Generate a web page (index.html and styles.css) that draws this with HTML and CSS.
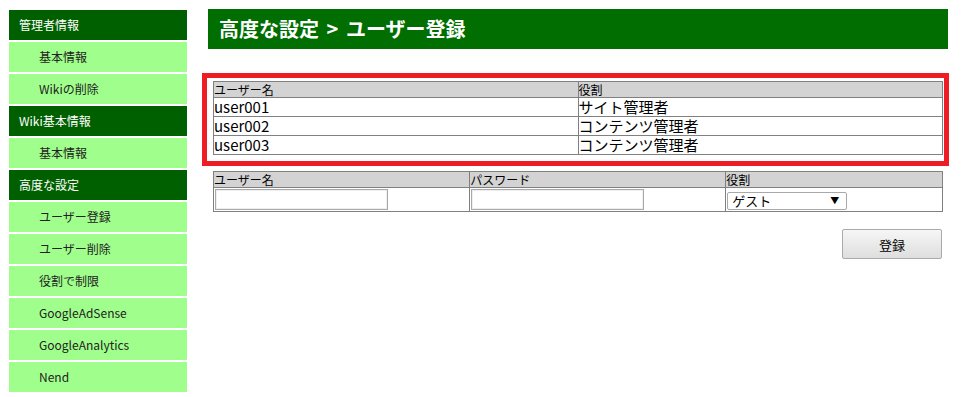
FILE: index.html
```html
<!DOCTYPE html>
<html lang="ja">
<head>
  <meta charset="UTF-8">
  <title>高度な設定 &gt; ユーザー登録</title>
  <link rel="stylesheet" href="styles.css">
</head>
<body>
  <div class="page">
    <nav class="sidebar">
      <div class="menu-head">管理者情報</div>
      <div class="menu-item">基本情報</div>
      <div class="menu-item">Wikiの削除</div>
      <div class="menu-head">Wiki基本情報</div>
      <div class="menu-item">基本情報</div>
      <div class="menu-head">高度な設定</div>
      <div class="menu-item">ユーザー登録</div>
      <div class="menu-item">ユーザー削除</div>
      <div class="menu-item">役割で制限</div>
      <div class="menu-item">GoogleAdSense</div>
      <div class="menu-item">GoogleAnalytics</div>
      <div class="menu-item">Nend</div>
    </nav>

    <main class="content">
      <h1 class="title">高度な設定 &gt; ユーザー登録</h1>

      <div class="highlight">
        <table class="user-table">
          <tr>
            <th>ユーザー名</th>
            <th>役割</th>
          </tr>
          <tr>
            <td>user001</td>
            <td>サイト管理者</td>
          </tr>
          <tr>
            <td>user002</td>
            <td>コンテンツ管理者</td>
          </tr>
          <tr>
            <td>user003</td>
            <td>コンテンツ管理者</td>
          </tr>
        </table>
      </div>

      <table class="form-table">
        <tr>
          <th class="col-name">ユーザー名</th>
          <th class="col-pass">パスワード</th>
          <th>役割</th>
        </tr>
        <tr>
          <td><input type="text" class="field"></td>
          <td><input type="password" class="field"></td>
          <td>
            <span class="select-wrap">
              <select class="role">
                <option>ゲスト</option>
                <option>コンテンツ管理者</option>
                <option>サイト管理者</option>
              </select>
            </span>
          </td>
        </tr>
      </table>

      <div class="actions">
        <button class="btn">登録</button>
      </div>
    </main>
  </div>
</body>
</html>
```

FILE: styles.css
```css
/* 全体 */
body {
  margin: 0;
  font-family: "Noto Sans CJK JP", "DejaVu Sans", sans-serif;
  color: #222;
  background-color: #fff;
}

.page {
  display: flex;
  align-items: flex-start;
  padding-left: 9px;
}

/* サイドメニュー */
.sidebar {
  width: 178px;
  margin-top: 10px;
  font-size: 12px;
}

.menu-head,
.menu-item {
  height: 30px;
  line-height: 30px;
  margin-bottom: 2px;
}

.menu-head {
  padding-left: 10px;
  background-color: #006000; /* 濃い緑 */
  color: #fff;
}

.menu-item {
  padding-left: 30px;
  background-color: #a0ff8c; /* 薄い緑 */
  color: #222;
}

/* メイン */
.content {
  width: 740px;
  margin-top: 9px;
  margin-left: 21px;
}

.title {
  margin: 0;
  height: 40px;
  line-height: 40px;
  padding-left: 11px;
  background-color: #006e00;
  color: #fff;
  font-size: 20px;
  font-weight: bold;
  word-spacing: 3px;
}

.highlight {
  margin: 24px -1px 0 -6px;
  padding: 3px 1px 6px 6px;
  border: 5px solid #ee1c25;
}

table {
  border-collapse: collapse;
  border: 1px solid #808080;
}

th,
td {
  border: 1px solid #808080;
  padding: 0;
  text-align: left;
  vertical-align: middle;
  overflow: hidden;
}

th {
  height: 15px;
  background-color: #d3d3d3;
  font-weight: normal;
  font-size: 12px;
  line-height: 15px;
  color: #000;
}

.user-table {
  width: 730px;
  table-layout: fixed;
}

.user-table td {
  height: 18px;
  font-size: 15px;
  line-height: 18px;
  color: #000;
}

.form-table {
  width: 730px;
  margin: 5px 5px 0;
  table-layout: fixed;
}

.form-table .col-name,
.form-table .col-pass {
  width: 35%;
}

.form-table td {
  padding: 1px;
  height: 21px;
  line-height: 0;
  font-size: 0;
}

.field {
  display: block;
  box-sizing: border-box;
  width: 173px;
  height: 21px;
  margin: 0;
  border: 1px solid #a9a9a9;
  box-shadow: inset 0 0 0 1px #eee;
}

.select-wrap {
  position: relative;
  display: inline-block;
  vertical-align: top;
  margin-top: 2px;
}

.select-wrap::after {
  content: "▼";
  position: absolute;
  right: 8px;
  top: 3px;
  font-size: 9px;
  line-height: 12px;
  color: #000;
  pointer-events: none;
}

.role {
  display: block;
  box-sizing: border-box;
  width: 120px;
  height: 18px;
  margin: 0;
  padding: 0 4px;
  border: 1px solid #a9a9a9;
  border-radius: 2px;
  background-color: #fff;
  font-family: inherit;
  font-size: 13px;
  line-height: 16px;
  color: #000;
  appearance: none;
  -webkit-appearance: none;
}

.actions {
  display: flex;
  justify-content: flex-end;
  margin-top: 17px;
  padding-right: 6px;
}

.btn {
  width: 100px;
  height: 30px;
  border: 1px solid #aaa;
  border-radius: 2px;
  background: linear-gradient(#f6f6f6, #dedede);
  font-family: inherit;
  font-size: 13px;
  color: #000;
}
```
